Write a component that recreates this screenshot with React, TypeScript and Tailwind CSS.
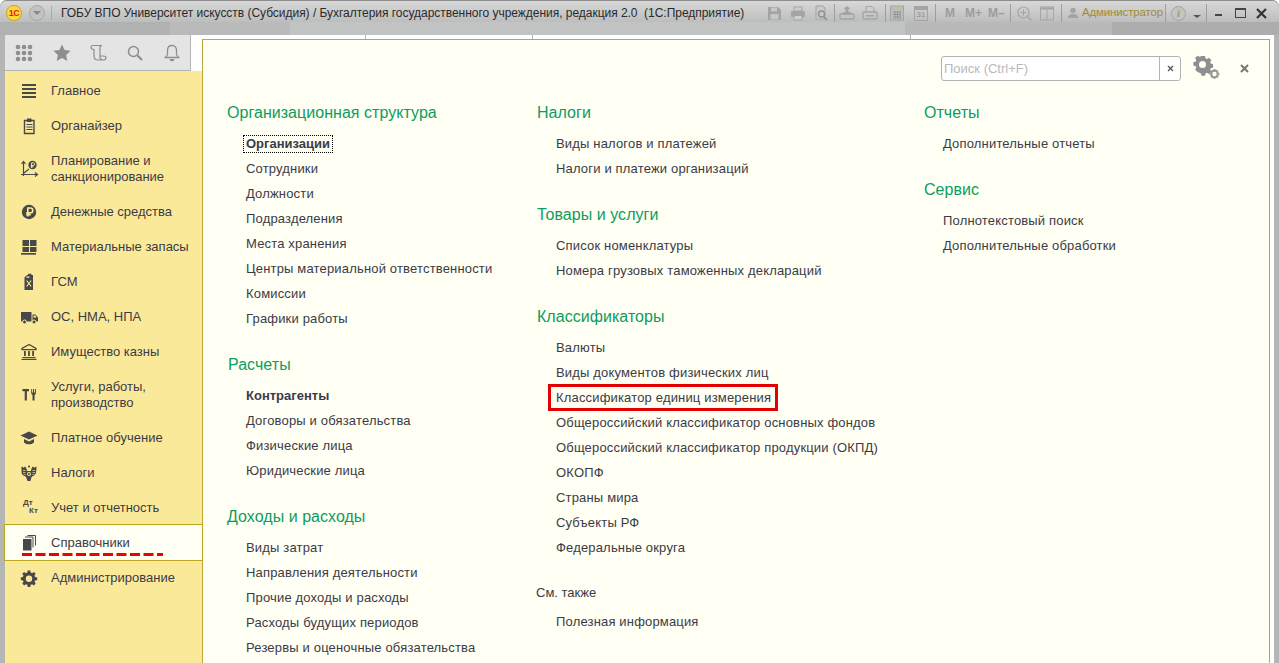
import React from "react";

const I = ({ children, w = 20, h = 20, vb, className = "" }: { children: React.ReactNode; w?: number; h?: number; vb?: string; className?: string }) => (
  <svg width={w} height={h} viewBox={vb ?? `0 0 ${w} ${h}`} className={"shrink-0 " + className}>{children}</svg>
);
const D = "#484848";

const icons: Record<string, React.ReactNode> = {
  main: <I><g fill={D}><rect x="2" y="3" width="14" height="2" /><rect x="2" y="7" width="14" height="2" /><rect x="2" y="11" width="14" height="2" /><rect x="2" y="15" width="14" height="2" /></g></I>,
  org: <I><path d="M4.5 4.5h9.5v13H4.5z" fill="none" stroke={D} strokeWidth="1.4" /><rect x="7" y="2.5" width="4.5" height="3.5" fill={D} /><path d="M6.5 8.5h6M6.5 11h6M6.5 13.5h6" stroke={D} strokeWidth="1.2" /></I>,
  plan: <I><path d="M3.5 3v14M1.500 5l2-2.500 2 2.500M1 15.500h16M15 13.500l2.500 2-2.500 2M4 14l5-4" fill="none" stroke={D} strokeWidth="1.2" /><circle cx="12.500" cy="6" r="4.200" fill={D} /><path d="M11.600 9V3.800h1.600a1.300 1.300 0 0 1 0 2.800h-2.400M10.800 7.800h2.600" stroke="#fbe99a" strokeWidth="1" fill="none" /></I>,
  money: <I><circle cx="9" cy="10" r="7.200" fill={D} /><path d="M7.800 14.500V6h2.600a2.300 2.300 0 0 1 0 4.800H6.200M6.200 12.600h4.600" stroke="#fbe99a" strokeWidth="1.600" fill="none" /></I>,
  mat: <I><g fill={D}><rect x="2.500" y="3" width="6.500" height="6" /><rect x="10" y="3" width="6.500" height="6" /><rect x="2.500" y="10" width="6.500" height="5" /><rect x="10" y="10" width="6.500" height="5" /><rect x="1" y="16" width="15" height="1.700" /></g></I>,
  gsm: <I><path d="M4.500 5.500 7 3h6v15H4.500z" fill={D} /><rect x="8" y="1.800" width="3.500" height="2.400" fill={D} /><path d="M6.600 8.500l4.600 6M11.200 8.500l-4.600 6" stroke="#fbe99a" strokeWidth="1.100" /><rect x="6.500" y="4.500" width="3" height="1.300" fill="#fbe99a" /></I>,
  truck: <I><path d="M1 5h10.500v9.500H1zM12.500 7.500h3l2.500 3v4h-5.500z" fill={D} /><circle cx="4.500" cy="15" r="2" fill={D} stroke="#fbe99a" /><circle cx="14" cy="15" r="2" fill={D} stroke="#fbe99a" /><path d="M13.500 8.500h2l1 2h-3z" fill="#fbe99a" /></I>,
  bank: <I><path d="M9 2.500 2 6.500v1.200h14V6.500z" fill="none" stroke={D} strokeWidth="1.300" /><path d="M4 9h1.800v5H4zM8.100 9h1.800v5H8.100zM12.200 9H14v5h-1.800zM2.500 15h13v1.100h-13zM1.500 16.800h15V18h-15z" fill={D} /></I>,
  tools: <I><path d="M2.500 4h6.500v2.300H6.900V15.500H4.700V6.300H2.500z" fill={D} /><path d="M11.200 4v4c0 1 .6 1.600 1.300 1.900v5.600h2.100V9.900c.8-.3 1.300-.9 1.300-1.900V4h-1v3.500h-.9V4h-1v3.500h-.9V4z" fill={D} /></I>,
  cap: <I><path d="M9 3.500 .5 7.500 9 11.500l8.500-4z" fill={D} /><path d="M4 11v3.500c1.500 1.300 3 1.800 5 1.800s3.500-.5 5-1.800V11l-5 2.500z" fill={D} /></I>,
  eagle: <I><path d="M9 2.500c.8 0 1 .7 1 1.300L9 5l-1-1.200c0-.6.200-1.300 1-1.300z" fill={D} /><path d="M1.500 3.500c1 .6 1.500.6 2.200 1.300.300-.8 1-1 1.800-1 .6 1.300 1.500 2.500 1.500 4.200h4c0-1.700.9-2.900 1.500-4.200.8 0 1.500.2 1.800 1 .7-.7 1.200-.7 2.200-1.300-.1 3-.1 6.500-1.500 8.300-1 1.300-2.500 1.200-3.500 2.200L10.500 18H7.500L6 14c-1-1-2.500-.9-3.500-2.200C1.100 10 1.600 6.500 1.500 3.500z" fill={D} /><circle cx="9" cy="11" r="2" fill="#fbe99a" /><circle cx="9" cy="11" r="1.100" fill={D} /><path d="M3 7.500h2.500M3 9.500h2.500M3.500 11.500h2M12.500 7.500h2.500M12.500 9.500h2.500M12.500 11.500h2" stroke="#fbe99a" strokeWidth=".7" /></I>,
  books: <I><rect x="3" y="6" width="8.500" height="11.500" fill={D} /><path d="M5 4h8v10.500M7.500 2.500h8v10" fill="none" stroke={D} strokeWidth="1" /></I>,
  gear: <I><path fillRule="evenodd" clipRule="evenodd" d="M7.700 2.500h2.600l.4 2.100 1.400.6 1.800-1.200 1.800 1.800-1.200 1.800.6 1.400 2.100.4v2.600l-2.100.4-.6 1.400 1.200 1.800-1.800 1.800-1.800-1.200-1.400.6-.4 2.100H7.700l-.4-2.100-1.400-.6-1.800 1.200-1.800-1.800 1.200-1.800-.6-1.400-2.100-.4V9.400l2.100-.4.6-1.400-1.200-1.800 1.800-1.800 1.800 1.200 1.400-.6zM9 7.500a3.200 3.200 0 1 0 0 6.400 3.200 3.200 0 0 0 0-6.400z" fill={D} /></I>,
};

const menu: { k?: string; t: React.ReactNode; tall?: boolean; active?: boolean }[] = [
  { k: "main", t: "Главное" },
  { k: "org", t: "Органайзер" },
  { k: "plan", t: <>Планирование и<br />санкционирование</>, tall: true },
  { k: "money", t: "Денежные средства" },
  { k: "mat", t: "Материальные запасы" },
  { k: "gsm", t: "ГСМ" },
  { k: "truck", t: "ОС, НМА, НПА" },
  { k: "bank", t: "Имущество казны" },
  { k: "tools", t: <>Услуги, работы,<br />производство</>, tall: true },
  { k: "cap", t: "Платное обучение" },
  { k: "eagle", t: "Налоги" },
  { t: "Учет и отчетность" },
  { k: "books", t: "Справочники", active: true },
  { k: "gear", t: "Администрирование" },
];

const G = "#a3a5a5";
const Sep = ({ ml }: { ml: number }) => <div style={{ marginLeft: ml }} className="w-px h-[18px] bg-[#9c9e9e] shrink-0" />;
const Box = ({ ml, w, children }: { ml: number; w: number; children: React.ReactNode }) => (
  <div style={{ marginLeft: ml, width: w }} className="shrink-0 flex items-center justify-center">{children}</div>
);

type Item = { t: string; bold?: boolean; focus?: boolean; red?: boolean };

function Section({ title, items, xoff = 0 }: { title: string; items: (string | Item)[]; xoff?: number }) {
  return (
    <section className="mb-[21px]">
      <h2 style={{ marginLeft: xoff }} className="h-[25px] mb-[6px] flex items-center text-[16px] tracking-[0.04px] text-[#0d9c62] whitespace-nowrap">{title}</h2>
      <ul className="pl-[19px]">
        {items.map((it, i) => {
          const o: Item = typeof it === "string" ? { t: it } : it;
          return (
            <li key={i} className={"relative h-[25px] flex items-center text-[13px] whitespace-nowrap text-[#3b3b48] " + (o.bold ? "font-bold" : "tracking-[0.17px]")}>
              {o.focus ? <span className="outline-1 outline-dotted outline-black outline-offset-[2px] leading-[12px]">{o.t}</span> : <span>{o.t}</span>}
              {o.red && <span className="absolute left-[-8px] top-[-1px] w-[230px] h-[27px] border-[3px] border-[#e30000]" />}
            </li>
          );
        })}
      </ul>
    </section>
  );
}

export default function App() {
  return (
    <div className="w-[1279px] h-[663px] overflow-hidden bg-white font-['Liberation_Sans',Arial,sans-serif]">
      <div className="w-full h-full rounded-t-[7px] bg-[#b4b6b6] flex flex-col">
        {/* title bar */}
        <header className="h-[35px] shrink-0 flex flex-col rounded-t-[7px] border-t border-[#8d8d8d] bg-[#c4c5c5]">
          <div className="h-[21px] pt-[3px] flex items-center bg-gradient-to-b from-[#d8d8d8] to-[#bcbdbd] rounded-t-[7px] relative">
            <div className="ml-[6px] w-[16px] h-[16px] rounded-full bg-[#ffd93b] border border-[#c9a81f] flex items-center justify-center shrink-0">
              <span className="text-[9px] leading-none font-bold text-[#e02010] tracking-[-0.5px]">1С</span>
            </div>
            <div className="ml-[7px] w-[16px] h-[16px] rounded-full bg-[#c2c2c2] border border-[#a9a9a9] flex items-center justify-center shrink-0">
              <span className="w-0 h-0 border-x-[4px] border-x-transparent border-t-[4px] border-t-[#8a8a8a]" />
            </div>
            <div className="ml-[6px] w-px h-[14px] bg-[#a9a9a9] shrink-0" />
            <span className="ml-[9px] w-[707px] shrink-0 text-[12px] tracking-[-0.03px] text-[#2a2a2a] whitespace-nowrap">ГОБУ ВПО Университет искусств (Субсидия) / Бухгалтерия государственного учреждения, редакция 2.0&nbsp;&nbsp;(1С:Предприятие)</span>
            <Box ml={-2} w={16}><I w={15} h={15}><path d="M1 1h10l3 3v10H1z" fill={G} /><rect x="4" y="1.500" width="6" height="4" fill="#c6c7c7" /><rect x="3.500" y="8" width="8" height="5.500" fill="#c6c7c7" /></I></Box>
            <Box ml={8} w={16}><I w={16} h={15}><rect x="4" y="1" width="8" height="4" fill="none" stroke={G} /><rect x="1" y="5" width="14" height="6" rx="1" fill={G} /><rect x="4" y="9.500" width="8" height="4.500" fill="#cfcfcf" stroke={G} /></I></Box>
            <Box ml={8} w={15}><I w={15} h={16}><path d="M2 1h7l2 2v11H2z" fill="#c9caca" stroke={G} /><circle cx="7.500" cy="9" r="3" fill="none" stroke="#8f9191" strokeWidth="1.400" /><path d="M9.500 11.500l3.500 3.500" stroke="#8f9191" strokeWidth="1.600" /></I></Box>
            <Sep ml={5} />
            <Box ml={4} w={16}><I w={16} h={16}><path d="M8 1l3.500 3H9.500v3h-3V4H4.500z" fill={G} /><rect x="1" y="9" width="14" height="5" rx="1" fill="none" stroke={G} strokeWidth="1.400" /><rect x="4" y="7" width="8" height="3" fill={G} /></I></Box>
            <Box ml={7} w={16}><I w={16} h={16}><path d="M4 7V1.500h6l2 2V7" fill="none" stroke={G} /><rect x="1" y="7" width="14" height="7" rx="1" fill="none" stroke={G} strokeWidth="1.300" /><rect x="4" y="10" width="8" height="1.500" fill={G} /></I></Box>
            <Sep ml={7} />
            <Box ml={4} w={14}><I w={14} h={16}><rect x=".5" y="1" width="13" height="14" fill="#bcbdbd" stroke={G} /><rect x="1" y="1.500" width="12" height="3" fill="#b4c2a6" /><path d="M3 7h8M3 9.500h8M3 12h8M5 6v8M7.500 6v8M10 6v8" stroke="#8f9191" strokeWidth=".8" /></I></Box>
            <Box ml={10} w={14}><div className="w-[14px] h-[15px] border border-[#a3a5a5] border-t-[4px] flex items-center justify-center text-[8px] leading-none text-[#8f9191]">31</div></Box>
            <Sep ml={7} />
            <span className="ml-[9px] w-[11px] shrink-0 text-[12px] font-bold text-[#9b9d9d]">M</span>
            <span className="ml-[9px] w-[18px] shrink-0 text-[12px] font-bold text-[#9b9d9d]">M+</span>
            <span className="ml-[5px] w-[17px] shrink-0 text-[12px] font-bold text-[#9b9d9d]">M–</span>
            <Sep ml={5} />
            <Box ml={6} w={15}><I w={15} h={15}><circle cx="6.500" cy="6.500" r="5.500" fill="none" stroke={G} strokeWidth="1.200" /><path d="M6.500 3.500v6M3.500 6.500h6" stroke={G} /><path d="M10.500 10.500l4 4" stroke={G} strokeWidth="1.500" /></I></Box>
            <Box ml={8} w={14}><I w={14} h={15}><rect x=".5" y="1" width="13" height="13" fill="none" stroke={G} /><path d="M7 1v13" stroke={G} /><rect x="1" y="1.500" width="12" height="2" fill={G} /></I></Box>
            <Sep ml={7} />
            <Box ml={6} w={10}><I w={10} h={12}><circle cx="5" cy="3.500" r="2.800" fill={G} /><path d="M0 11c0-3 2-4 5-4s5 1 5 4z" fill={G} /></I></Box>
            <span className="ml-[4px] w-[80px] shrink-0 text-[11.500px] tracking-[-0.15px] text-[#a28a33] whitespace-nowrap">Администратор</span>
            <Sep ml={3} />
            <div className="ml-[5px] w-[15px] h-[15px] rounded-full border border-[#a3a5a5] bg-[#c3c4c4] flex items-center justify-center shrink-0 text-[11px] italic font-bold font-['Liberation_Serif',serif] text-[#a39a6a] leading-none">i</div>
            <span className="ml-[7px] mt-[6px] w-0 h-0 shrink-0 border-x-[4px] border-x-transparent border-t-[3px] border-t-[#555]" />
            <Sep ml={5} />
            <span className="ml-[8px] mt-[4px] w-[7px] h-[2px] bg-[#444] shrink-0" />
            <span className="ml-[13px] w-[11px] h-[10px] border border-[#444] border-t-2 shrink-0" />
            <Box ml={10} w={11}><I w={11} h={11}><path d="M1 1l9 9M10 1l-9 9" stroke="#333" strokeWidth="2.200" /></I></Box>
          </div>
          <div className="flex-1 bg-[linear-gradient(90deg,#b0b2b2_0,#b0b2b2_170px,#bababa_170px,#bababa_290px,#c2c3c3_290px,#c2c3c3_905px,#b8b9b8_905px,#b8b9b8_1112px,#adadad_1112px)]" />
        </header>

        {/* body */}
        <div className="flex-1 min-h-0 flex pl-[5px] pr-[5px]">
          <div className="w-[197px] shrink-0 flex flex-col bg-white">
            <div className="h-[36px] w-[186px] shrink-0 bg-[#e4e4e4] border-r border-[#b5b5b5] border-b flex items-center">
              <I w={18} h={18} className="ml-[10px]"><g fill="#8e8e8e"><circle cx="3" cy="3" r="2.300" /><circle cx="9" cy="3" r="2.300" /><circle cx="15" cy="3" r="2.300" /><circle cx="3" cy="9" r="2.300" /><circle cx="9" cy="9" r="2.300" /><circle cx="15" cy="9" r="2.300" /><circle cx="3" cy="15" r="2.300" /><circle cx="9" cy="15" r="2.300" /><circle cx="15" cy="15" r="2.300" /></g></I>
              <I w={18} h={18} className="ml-[20px]"><path d="M9 .5l2.600 5.600 6 .7-4.500 4.100 1.200 6L9 14l-5.300 2.900 1.200-6L.4 6.800l6-.7z" fill="#8e8e8e" /></I>
              <I w={17} h={18} className="ml-[19px]"><path d="M3 1.500H11C10 2.500 10 3 10 4V13C10 15 11 16 13 16S16 15 16 13.500 14.500 12 13 12H10M3 1.500C1.500 1.500 1 2.500 1 3.500S2 5.500 4 5.500V12C4 14.500 5.500 16 8 16H13" fill="none" stroke="#8e8e8e" strokeWidth="1.200" /></I>
              <I w={16} h={16} className="ml-[20px]"><circle cx="6.500" cy="6.500" r="5" fill="none" stroke="#8e8e8e" strokeWidth="1.500" /><path d="M10.500 10.500l4.500 4.500" stroke="#8e8e8e" strokeWidth="2.200" /></I>
              <I w={16} h={18} className="ml-[21px]"><path d="M8 1.500c-3 0-4.500 2.200-4.500 5v3.500c0 1.500-1 2.500-2 3.500h13c-1-1-2-2-2-3.500V6.500c0-2.800-1.500-5-4.500-5z" fill="none" stroke="#8e8e8e" strokeWidth="1.300" /><path d="M5.500 15c.3 1.500 1.300 2.300 2.500 2.300s2.200-.8 2.500-2.300z" fill="#8e8e8e" /></I>
            </div>
            <nav className="flex-1 bg-[#fbe99a] pt-[2px]">
              {menu.map((m, i) => (
                <div key={i} className={"relative flex items-center pl-[15px] text-[13px] leading-[16px] text-[#3b3b48] " + (m.tall ? "h-[51px]" : "h-[35px]") + (m.active ? " bg-[#fffff3] outline-1 outline-[#bda51e]" : "")}>
                  <span className="w-[31px] shrink-0 flex items-center">
                    {m.k ? icons[m.k] : (
                      <span className="w-[18px] h-[18px] flex flex-col text-[8px] leading-[8px] font-bold text-[#484848]">
                        <span className="pl-[3px]">Дт</span><span className="pl-[9px]">Кт</span>
                      </span>
                    )}
                  </span>
                  <span className="whitespace-nowrap">{m.t}</span>
                  {m.active && (
                    <svg width="141" height="3" className="absolute left-[17px] top-[28px]"><line x1="0" y1="1.500" x2="141" y2="1.500" stroke="#f00000" strokeWidth="3" strokeDasharray="10 3.500" /></svg>
                  )}
                </div>
              ))}
            </nav>
          </div>

          <main className="flex-1 min-w-0 bg-white flex flex-col">
            <div className="h-[4px] shrink-0 flex">
              <div className="ml-[163px] w-px bg-[#b5b5b5]" />
              <div className="ml-[166px] w-px bg-[#b5b5b5]" />
              <div className="ml-[377px] w-px bg-[#b5b5b5]" />
            </div>
            <div className="flex-1 min-h-0 mr-[4px] border border-b-0 border-[#bda83a] bg-[#fffff3] flex flex-col">
              <div className="h-[60px] shrink-0 pt-[16px] flex items-start">
                <div className="ml-[738px] w-[240px] h-[25px] rounded-[3px] border border-[#b3b3b3] bg-white flex items-stretch">
                  <span className="flex-1 pl-[2px] text-[13px] leading-[23px] text-[#b9b9b9]">Поиск (Ctrl+F)</span>
                  <span className="w-[21px] border-l border-[#b3b3b3] flex items-center justify-center">
                    <I w={7} h={7}><path d="M1 1l5 5M6 1L1 6" stroke="#555" strokeWidth="1.300" /></I>
                  </span>
                </div>
                <I w={28} h={26} className="ml-[12px] mt-[-1px]">
                  <g transform="translate(0,-1)"><path fillRule="evenodd" clipRule="evenodd" d="M8.800 1.500h4.400l.5 2.700 2 .8 2.300-1.500 3 3-1.500 2.300.8 2 2.700.5v4.400l-2.700.5-.8 2 1.500 2.300-3 3-2.300-1.500-2 .8-.5 2.700H8.800l-.5-2.700-2-.8L4 21l-3-3 1.500-2.300-.8-2L-1 13.200V8.800l2.700-.5.8-2L1 4l3-3 2.300 1.500 2-.8z" fill="#8e8e8e" transform="scale(.82) translate(1.500,1)" /><circle cx="9.500" cy="10.500" r="3.500" fill="#fffff3" /></g>
                  <g transform="translate(16.500,14)"><circle cx="5" cy="5" r="3.300" fill="none" stroke="#9a9a9a" strokeWidth="2.200" /><path d="M5 0v2M5 8v2M0 5h2M8 5h2M1.500 1.500l1.300 1.300M7.200 7.200l1.300 1.300M8.500 1.500L7.200 2.800M2.800 7.200L1.500 8.500" stroke="#9a9a9a" strokeWidth="1.500" /></g>
                </I>
                <I w={9} h={9} className="ml-[19px] mt-[8px]"><path d="M1 1l7 7M8 1L1 8" stroke="#777" strokeWidth="2" /></I>
              </div>
              <div className="flex pl-[24px] overflow-hidden">
                <div className="w-[310px] shrink-0">
                  <Section title="Организационная структура" items={[{ t: "Организации", bold: true, focus: true }, "Сотрудники", "Должности", "Подразделения", "Места хранения", "Центры материальной ответственности", "Комиссии", "Графики работы"]} />
                  <Section title="Расчеты" xoff={1} items={[{ t: "Контрагенты", bold: true }, "Договоры и обязательства", "Физические лица", "Юридические лица"]} />
                  <Section title="Доходы и расходы" items={["Виды затрат", "Направления деятельности", "Прочие доходы и расходы", "Расходы будущих периодов", "Резервы и оценочные обязательства"]} />
                </div>
                <div className="w-[387px] shrink-0">
                  <Section title="Налоги" items={["Виды налогов и платежей", "Налоги и платежи организаций"]} />
                  <Section title="Товары и услуги" items={["Список номенклатуры", "Номера грузовых таможенных деклараций"]} />
                  <Section title="Классификаторы" items={["Валюты", "Виды документов физических лиц", { t: "Классификатор единиц измерения", red: true }, "Общероссийский классификатор основных фондов", "Общероссийский классификатор продукции (ОКПД)", "ОКОПФ", "Страны мира", "Субъекты РФ", "Федеральные округа"]} />
                  <div className="h-[24px] ml-[-1px] flex items-center text-[13px] text-[#3b3b48]">См. также</div>
                  <ul className="pl-[19px] mt-[4px]"><li className="h-[25px] flex items-center text-[13px] tracking-[0.17px] text-[#3b3b48]">Полезная информация</li></ul>
                </div>
                <div className="flex-1">
                  <Section title="Отчеты" items={["Дополнительные отчеты"]} />
                  <Section title="Сервис" items={["Полнотекстовый поиск", "Дополнительные обработки"]} />
                </div>
              </div>
            </div>
          </main>
        </div>
      </div>
    </div>
  );
}
